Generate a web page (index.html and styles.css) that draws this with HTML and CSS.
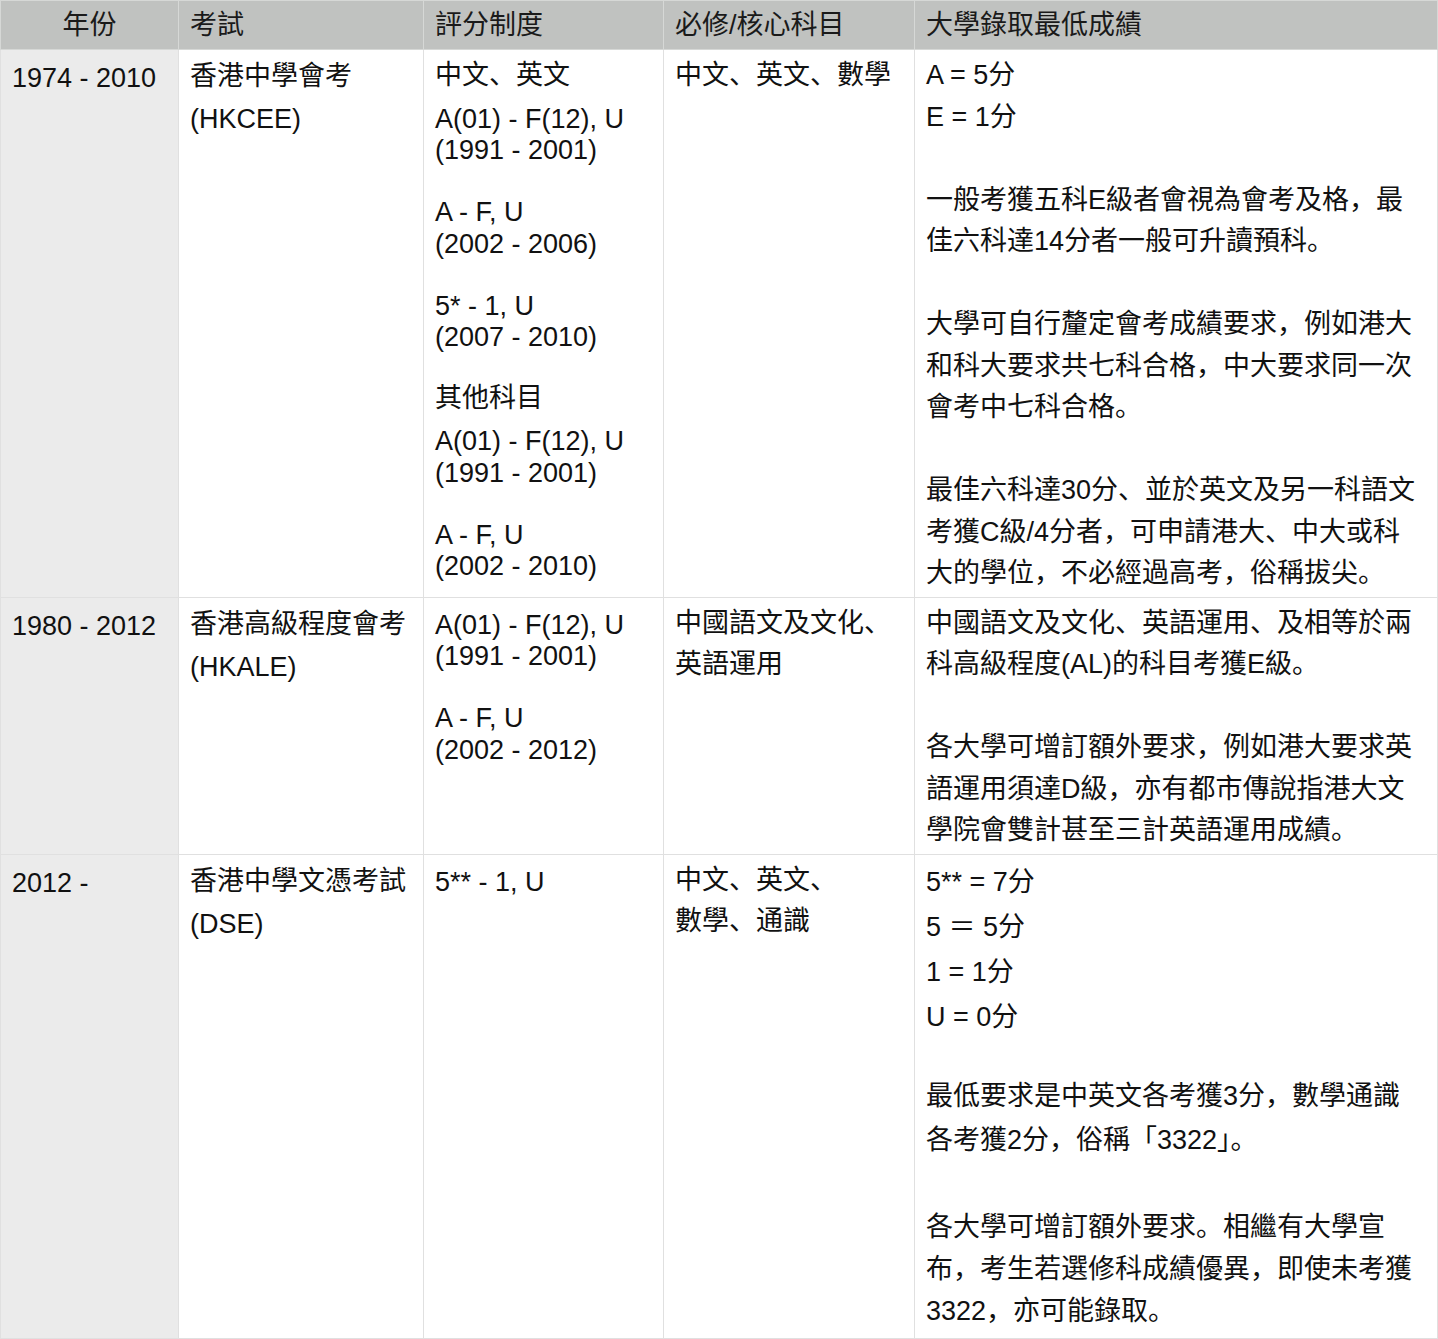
FILE: index.html
```html
<!DOCTYPE html>
<html lang="zh">
<head>
<meta charset="utf-8">
<title>香港公開考試與大學錄取</title>
<link rel="stylesheet" href="styles.css">
</head>
<body>
<table class="exam-table">
  <colgroup>
    <col class="w-year">
    <col class="w-exam">
    <col class="w-grade">
    <col class="w-core">
    <col class="w-req">
  </colgroup>
  <thead>
    <tr>
      <th class="year-head">年份</th>
      <th>考試</th>
      <th>評分制度</th>
      <th>必修/核心科目</th>
      <th>大學錄取最低成績</th>
    </tr>
  </thead>
  <tbody>
    <tr>
      <td class="year"><p class="lt top yr">1974 - 2010</p></td>
      <td><p class="exam">香港中學會考<br>(HKCEE)</p></td>
      <td>
        <p class="cj">中文、英文</p>
        <p class="lt top">A(01) - F(12), U<br>(1991 - 2001)</p>
        <p class="lt gap">A - F, U<br>(2002 - 2006)</p>
        <p class="lt gap">5* - 1, U<br>(2007 - 2010)</p>
        <p class="cj gap-cj">其他科目</p>
        <p class="lt tight">A(01) - F(12), U<br>(1991 - 2001)</p>
        <p class="lt gap">A - F, U<br>(2002 - 2010)</p>
      </td>
      <td><p class="cj">中文、英文、數學</p></td>
      <td>
        <p class="cj para">A = 5分<br>E = 1分</p>
        <p class="cj para">一般考獲五科E級者會視為會考及格，最<br>佳六科達14分者一般可升讀預科。</p>
        <p class="cj para">大學可自行釐定會考成績要求，例如港大<br>和科大要求共七科合格，中大要求同一次<br>會考中七科合格。</p>
        <p class="cj">最佳六科達30分、並於英文及另一科語文<br>考獲C級/4分者，可申請港大、中大或科<br>大的學位，不必經過高考，俗稱拔尖。</p>
      </td>
    </tr>
    <tr>
      <td class="year"><p class="lt top yr">1980 - 2012</p></td>
      <td><p class="exam">香港高級程度會考<br>(HKALE)</p></td>
      <td>
        <p class="lt top">A(01) - F(12), U<br>(1991 - 2001)</p>
        <p class="lt gap">A - F, U<br>(2002 - 2012)</p>
      </td>
      <td><p class="cj">中國語文及文化、<br>英語運用</p></td>
      <td>
        <p class="cj para">中國語文及文化、英語運用、及相等於兩<br>科高級程度(AL)的科目考獲E級。</p>
        <p class="cj">各大學可增訂額外要求，例如港大要求英<br>語運用須達D級，亦有都市傳說指港大文<br>學院會雙計甚至三計英語運用成績。</p>
      </td>
    </tr>
    <tr>
      <td class="year"><p class="lt top yr">2012 -</p></td>
      <td><p class="exam">香港中學文憑考試<br>(DSE)</p></td>
      <td><p class="lt top">5** - 1, U</p></td>
      <td><p class="cj">中文、英文、<br>數學、通識</p></td>
      <td>
        <p class="score">5** = 7分<br>5 ＝ 5分<br>1 = 1分<br>U = 0分</p>
        <p class="dse-min">最低要求是中英文各考獲3分，數學通識<br>各考獲2分，俗稱「3322」。</p>
        <p class="dse-extra">各大學可增訂額外要求。相繼有大學宣<br>布，考生若選修科成績優異，即使未考獲<br>3322，亦可能錄取。</p>
      </td>
    </tr>
  </tbody>
</table>
</body>
</html>
```

FILE: styles.css
```css
html, body {
  margin: 0;
  padding: 0;
  background: #ffffff;
}

body {
  font-family: "Liberation Sans", "Noto Sans CJK SC", sans-serif;
  font-size: 27px;
  color: #111111;
}

.exam-table {
  border-collapse: collapse;
  table-layout: fixed;
  width: 1437px;
}

.w-year { width: 178px; }
.w-exam { width: 245px; }
.w-grade { width: 240px; }
.w-core { width: 251px; }
.w-req { width: 523px; }

.exam-table th,
.exam-table td {
  border: 1px solid #e0e0e0;
  white-space: nowrap;
  overflow: visible;
}

.exam-table th {
  background: #c0c2c0;
  font-weight: normal;
  text-align: left;
  height: 45px;
  line-height: 45px;
  padding: 2px 11px 1px 11px;
  color: #1a1a1a;
  border-color: #d6d8d6;
}

.exam-table th.year-head {
  text-align: center;
}

.exam-table td {
  vertical-align: top;
  padding: 5px 11px 2px 11px;
}

.exam-table td.year {
  background: #ebebeb;
}

.exam-table p {
  margin: 0;
}

.cj {
  line-height: 41.5px;
}

.para {
  margin-bottom: 41.5px !important;
}

.lt {
  line-height: 31.5px;
}

.lt.top {
  margin-top: 7px;
}

.lt.top.yr {
  margin-top: 8px;
}

.lt.gap {
  margin-top: 30.5px;
}

.lt.tight {
  margin-top: 7px;
}

.cj.gap-cj {
  margin-top: 24px;
}

.exam {
  line-height: 43px;
}

.score {
  line-height: 45px;
}

.dse-min {
  line-height: 44px;
  margin-top: 34px !important;
}

.dse-extra {
  line-height: 42px;
  margin-top: 44px !important;
  margin-bottom: 4px !important;
}
```
